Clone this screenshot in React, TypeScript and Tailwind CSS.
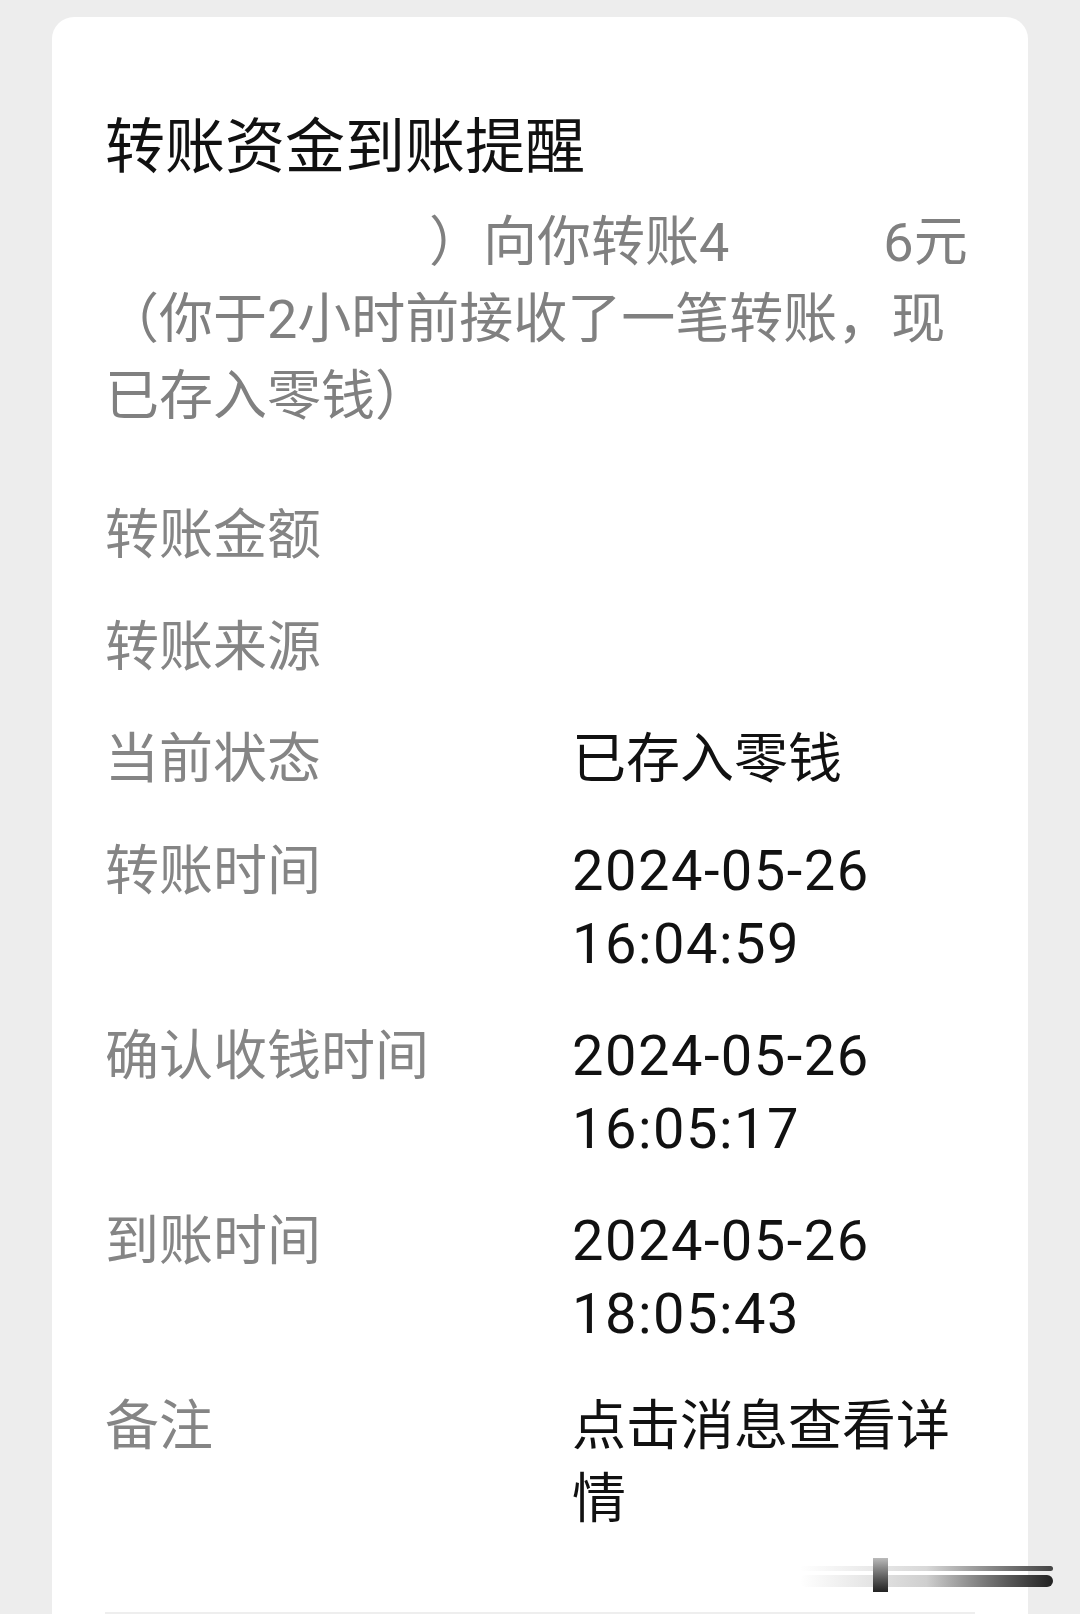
import React from 'react'

type Row = { label: string; lines: string[]; hidden?: boolean }

const rows: Row[] = [
  { label: '转账金额', lines: ['4????.?6元'], hidden: true },
  { label: '转账来源', lines: ['某某某'], hidden: true },
  { label: '当前状态', lines: ['已存入零钱'] },
  { label: '转账时间', lines: ['2024-05-26', '16:04:59'] },
  { label: '确认收钱时间', lines: ['2024-05-26', '16:05:17'] },
  { label: '到账时间', lines: ['2024-05-26', '18:05:43'] },
  { label: '备注', lines: ['点击消息查看详', '情'] },
]

// digits in the screenshot are a touch wider than the CJK em, so they get a little tracking
function Value({ text }: { text: string }) {
  const isDigits = /^[0-9:\-]+$/.test(text)
  return (
    <div
      className={
        isDigits
          ? 'whitespace-nowrap text-[56px] leading-[73px] tracking-[1.5px]'
          : 'whitespace-nowrap text-[54px] leading-[73px]'
      }
    >
      {text}
    </div>
  )
}

export default function App() {
  return (
    <div className="relative h-[1614px] overflow-hidden bg-[#ededed] px-[52px] pt-[17px] font-[Roboto,'Noto_Sans_CJK_SC',sans-serif]">
      <div className="rounded-[22px] bg-white px-[53px] pt-[95px] pb-[60px]">
        <h1 className="text-[60px] font-normal leading-[72px] text-[#111]">转账资金到账提醒</h1>

        <p className="mt-[20px] whitespace-nowrap text-[54px] leading-[77px] text-[#808080]">
          {/* sender name and the middle of the amount are blanked out in the screenshot */}
          <span className="text-white">某某（某某某</span>）向你转账4
          <span className="tracking-[-2px] text-white">8888.8</span>6元
          <br />
          （你于2小时前接收了一笔转账，现
          <br />
          已存入零钱）
        </p>

        <div className="mt-[64px] flex flex-col gap-[39px]">
          {rows.map((r) => (
            <div key={r.label} className="grid grid-cols-[467px_1fr]">
              <div className="text-[54px] leading-[73px] text-[#858585]">{r.label}</div>
              <div className={r.hidden ? 'text-white' : 'text-[#111]'}>
                {r.lines.map((l, i) => (
                  <Value key={i} text={l} />
                ))}
              </div>
            </div>
          ))}
        </div>

        <div className="mt-[76px] h-[2px] bg-[#eeeeee]" />
      </div>

      {/* blurry scroll-bar smear in the bottom right corner of the photo */}
      <div className="absolute left-[800px] top-[1566px] h-[5px] w-[253px] rounded-full bg-gradient-to-r from-transparent via-[#d8d8d8] to-[#444]" />
      <div className="absolute left-[800px] top-[1575px] h-[12px] w-[253px] rounded-full bg-gradient-to-r from-transparent via-[#cfcfcf] to-[#222]" />
      <div className="absolute left-[873px] top-[1558px] h-[34px] w-[15px] bg-gradient-to-b from-[#bbb] to-[#222]" />
    </div>
  )
}
